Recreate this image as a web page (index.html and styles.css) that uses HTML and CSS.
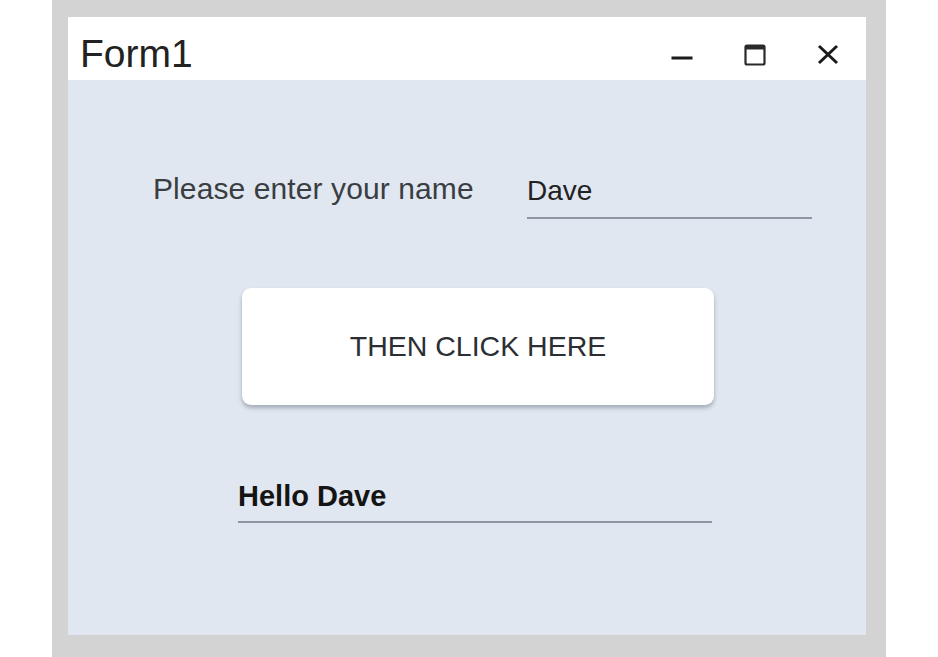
FILE: index.html
```html
<!DOCTYPE html>
<html lang="en">
<head>
  <meta charset="UTF-8" />
  <title>Form1</title>
  <link rel="stylesheet" href="styles.css">
</head>
<body>
  <div class="frame">
    <div class="window">
      <div class="title-bar">
        <span class="title">Form1</span>
        <div class="controls">
          <span class="ctl">
            <svg width="22" height="22" viewBox="0 0 22 22"><rect x="0.5" y="12.5" width="21" height="3" fill="#1b1b1b"/></svg>
          </span>
          <span class="ctl">
            <svg width="22" height="22" viewBox="0 0 22 22"><rect x="1.5" y="1.5" width="19" height="19" rx="1.5" fill="none" stroke="#2a2a2a" stroke-width="2.2"/><rect x="1.5" y="1.5" width="19" height="4" fill="#2a2a2a"/></svg>
          </span>
          <span class="ctl">
            <svg width="22" height="22" viewBox="0 0 22 22"><path d="M2 2 L20 19 M20 2 L2 19" stroke="#1b1b1b" stroke-width="3" stroke-linecap="butt"/></svg>
          </span>
        </div>
      </div>

      <div class="content">
        <div class="name-row">
          <span class="label">Please enter your name</span>
          <div class="field">Dave</div>
        </div>

        <button class="click-btn">THEN CLICK HERE</button>

        <div class="greeting">Hello Dave</div>
      </div>
    </div>
  </div>
</body>
</html>
```

FILE: styles.css
```css
body {
  margin: 0;
  background: #ffffff;
  font-family: 'Liberation Sans', Arial, sans-serif;
}

.frame {
  margin-left: 52px;
  width: 834px;
  height: 657px;
  box-sizing: border-box;
  padding: 17px 20px 22px 16px;
  background: #d3d3d3;
}

.window {
  height: 100%;
  display: flex;
  flex-direction: column;
  background: #e0e7f0;
}

.title-bar {
  height: 63px;
  background: #ffffff;
  display: flex;
  justify-content: space-between;
  align-items: flex-start;
}

.title {
  padding: 10px 0 0 12px;
  font-size: 39px;
  line-height: 53px;
  color: #222;
}

.controls {
  display: flex;
  padding-right: 2px;
}

.ctl {
  width: 73px;
  height: 63px;
  box-sizing: border-box;
  padding-top: 27px;
  display: flex;
  justify-content: center;
  align-items: flex-start;
}

.content {
  flex: 1;
  padding-top: 89px;
}

.name-row {
  display: flex;
  align-items: flex-start;
  padding-left: 85px;
}

.label {
  width: 374px;
  font-size: 30px;
  line-height: 40px;
  color: #3a3d42;
  letter-spacing: 0.1px;
}

.field {
  width: 285px;
  padding: 2px 0 6px;
  border-bottom: 2px solid #8d97a3;
  font-size: 28px;
  line-height: 40px;
  color: #222;
}

.click-btn {
  display: block;
  margin: 69px 0 0 174px;
  width: 472px;
  height: 117px;
  background: #ffffff;
  border: none;
  border-radius: 9px;
  box-shadow: 0 3px 4px rgba(90, 100, 115, 0.45);
  font-family: 'Liberation Sans', Arial, sans-serif;
  font-size: 28.5px;
  color: #2b2e33;
  cursor: pointer;
}

.greeting {
  margin: 71px 0 0 170px;
  width: 474px;
  padding-bottom: 5px;
  border-bottom: 2px solid #8d97a3;
  font-size: 29px;
  font-weight: bold;
  line-height: 40px;
  color: #141414;
}
```
